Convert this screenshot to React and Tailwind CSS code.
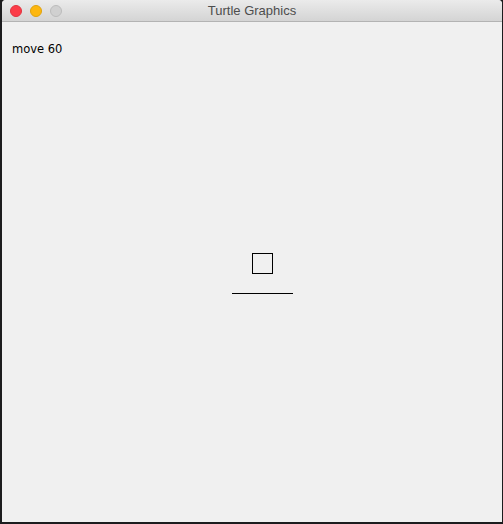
import React from 'react';

const TrafficLight = ({ color, border }) => (
  <span
    className="block w-[12px] h-[12px] rounded-full border"
    style={{ backgroundColor: color, borderColor: border }}
  />
);

const App = () => {
  return (
    <div className="w-[503px] h-[524px] bg-[#1c1c1e] pl-[2px] pr-[1px] pb-[2px]">
      <div className="w-[500px] h-[522px] flex flex-col bg-[#f0f0f0] rounded-t-[4px] overflow-hidden">
        {/* title bar */}
        <div className="relative h-[22px] flex items-center bg-gradient-to-b from-[#ebebeb] to-[#d4d4d4] border-b border-[#b3b3b3]">
          <div className="flex gap-[8px] pl-[8px]">
            <TrafficLight color="#fc3c48" border="#e2323e" />
            <TrafficLight color="#fdb70f" border="#e0a20c" />
            <TrafficLight color="#d0d0d0" border="#bcbcbc" />
          </div>
          <div className="absolute inset-0 flex items-center justify-center text-[13px] text-[#4d4d4d] font-['Liberation_Sans',sans-serif]">
            Turtle Graphics
          </div>
        </div>

        {/* canvas */}
        <div className="relative flex-1">
          <p className="pt-[20px] pl-[10px] text-[11.5px] leading-[14px] text-black font-['DejaVu_Sans',sans-serif]">
            move 60
          </p>
          <svg className="absolute inset-0" width="500" height="500" viewBox="0 0 500 500">
            <rect x="250.5" y="231.5" width="20" height="20" fill="none" stroke="#000" strokeWidth="1" />
            <line x1="230" y1="271.5" x2="291" y2="271.5" stroke="#000" strokeWidth="1" />
          </svg>
        </div>
      </div>
    </div>
  );
};

export default App;
